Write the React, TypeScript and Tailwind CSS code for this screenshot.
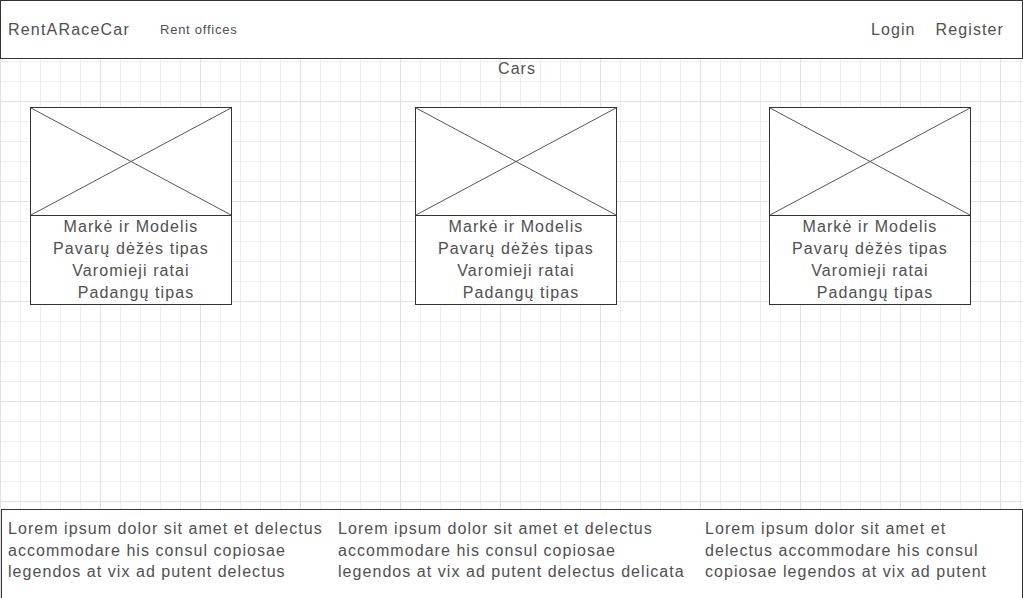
const font = "font-['Liberation_Sans',Arial,sans-serif]";

function CarCard({ className = "" }: { className?: string }) {
	return (
		<div className={`w-[202px] h-[198px] border border-[#333] bg-white flex flex-col shrink-0 ${className}`}>
			<div className="h-[108px] border-b border-[#333] shrink-0">
				<svg className="w-full h-full block" viewBox="0 0 200 107" preserveAspectRatio="none">
					<line x1="0" y1="0" x2="200" y2="107" stroke="#555" strokeWidth="1" vectorEffect="non-scaling-stroke" />
					<line x1="200" y1="0" x2="0" y2="107" stroke="#555" strokeWidth="1" vectorEffect="non-scaling-stroke" />
				</svg>
			</div>
			<div className="flex flex-col items-center text-[16px] leading-[22px] tracking-[1.1px] text-[#505050]">
				<span>Markė ir Modelis</span>
				<span>Pavarų dėžės tipas</span>
				<span>Varomieji ratai</span>
				<span className="pl-[10px]">Padangų tipas</span>
			</div>
		</div>
	);
}

function FooterColumn({ lines, className = "" }: { lines: string[]; className?: string }) {
	return (
		<div className={`flex flex-col shrink-0 ${className}`}>
			{lines.map((l) => (
				<span key={l} className="whitespace-nowrap">
					{l}
				</span>
			))}
		</div>
	);
}

export default function App() {
	return (
		<div
			className={`${font} w-full h-[598px] overflow-hidden flex flex-col bg-white [background-image:linear-gradient(to_right,#e2e2e2_1px,transparent_1px),linear-gradient(to_bottom,#e2e2e2_1px,transparent_1px),linear-gradient(to_right,#eeeeee_1px,transparent_1px),linear-gradient(to_bottom,#eeeeee_1px,transparent_1px)] [background-size:100px_100px,100px_100px,20px_20px,20px_20px] [background-position:0_1px]`}
		>
			<header className="h-[59px] shrink-0 border border-[#333] bg-white flex items-center pl-[7px] pr-[18px] text-[#505050]">
				<span className="text-[16px] tracking-[1.2px]">RentARaceCar</span>
				<span className="ml-[30px] text-[13px] tracking-[0.75px]">Rent offices</span>
				<div className="ml-auto flex items-center gap-[20px] text-[16px] tracking-[1.1px]">
					<span>Login</span>
					<span>Register</span>
				</div>
			</header>

			<main className="h-[450px] shrink-0 flex flex-col">
				<div className="pl-[11px] text-center text-[16px] leading-[20px] tracking-[1px] text-[#505050]">Cars</div>
				<div className="mt-[28px] flex">
					<CarCard className="ml-[30px]" />
					<CarCard className="ml-[183px]" />
					<CarCard className="ml-[152px]" />
				</div>
			</main>

			<footer className="h-[100px] shrink-0 ml-px border border-[#333] bg-white flex pl-[6px] pt-[8px] text-[16px] leading-[21.5px] tracking-[1.05px] text-[#505050]">
				<FooterColumn
					className="w-[330px]"
					lines={["Lorem ipsum dolor sit amet et delectus", "accommodare his consul copiosae", "legendos at vix ad putent delectus"]}
				/>
				<FooterColumn
					className="w-[367px]"
					lines={["Lorem ipsum dolor sit amet et delectus", "accommodare his consul copiosae", "legendos at vix ad putent delectus delicata"]}
				/>
				<FooterColumn
					lines={["Lorem ipsum dolor sit amet et", "delectus accommodare his consul", "copiosae legendos at vix ad putent"]}
				/>
			</footer>
		</div>
	);
}
